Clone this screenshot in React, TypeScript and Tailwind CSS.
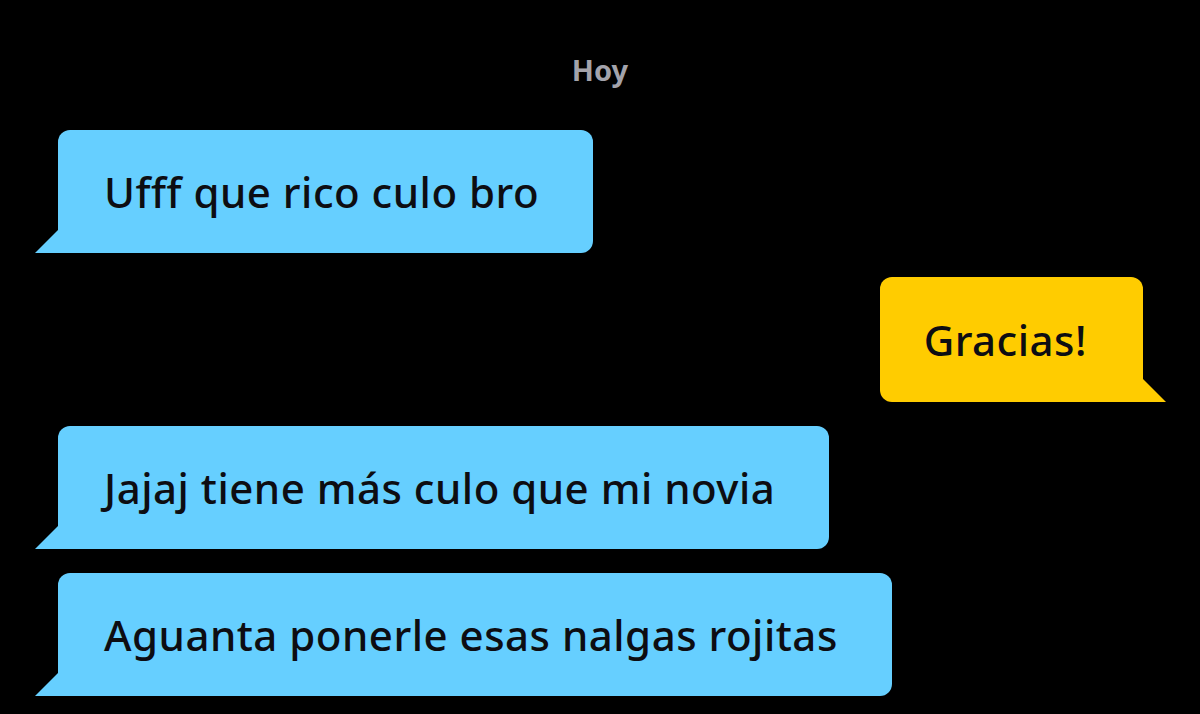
type Message = {
  id: number;
  text: string;
  mine: boolean;
};

const messages: Message[] = [
  { id: 1, text: "Ufff que rico culo bro", mine: false },
  { id: 2, text: "Gracias!", mine: true },
  { id: 3, text: "Jajaj tiene más culo que mi novia", mine: false },
  { id: 4, text: "Aguanta ponerle esas nalgas rojitas", mine: false },
];

const Bubble = ({ message }: { message: Message }) => {
  if (message.mine) {
    return (
      <div className="flex justify-end pr-[57px]">
        <div className="relative h-[125px] flex items-center rounded-[12px] rounded-br-none bg-[#ffcc00] pl-[44px] pr-[56px]">
          <span className="text-[42px] tracking-[0.5px] font-medium text-[#0d0d12]">{message.text}</span>
          <svg
            className="absolute bottom-0 -right-[23px]"
            width="24"
            height="24"
            viewBox="0 0 24 24"
          >
            <polygon points="0,0 24,24 0,24" fill="#ffcc00" />
          </svg>
        </div>
      </div>
    );
  }

  return (
    <div className="flex justify-start pl-[58px]">
      <div className="relative h-[123px] flex items-center rounded-[12px] rounded-bl-none bg-[#66cfff] pl-[46px] pr-[54px]">
        <span className="text-[42px] tracking-[0.5px] font-medium text-[#0d0d12]">{message.text}</span>
        <svg
          className="absolute bottom-0 -left-[23px]"
          width="24"
          height="24"
          viewBox="0 0 24 24"
        >
          <polygon points="24,0 24,24 0,24" fill="#66cfff" />
        </svg>
      </div>
    </div>
  );
};

export default function App() {
  return (
    <div className="w-[1200px] h-[714px] overflow-hidden bg-black font-['Noto_Sans',sans-serif]">
      <div className="pt-[50px] pb-[24px] text-center">
        <span className="text-[29px] leading-[40px] font-bold text-[#a3a3ab]">Hoy</span>
      </div>
      <div className="flex flex-col gap-6 pt-4">
        {messages.map((m) => (
          <Bubble key={m.id} message={m} />
        ))}
      </div>
    </div>
  );
}
